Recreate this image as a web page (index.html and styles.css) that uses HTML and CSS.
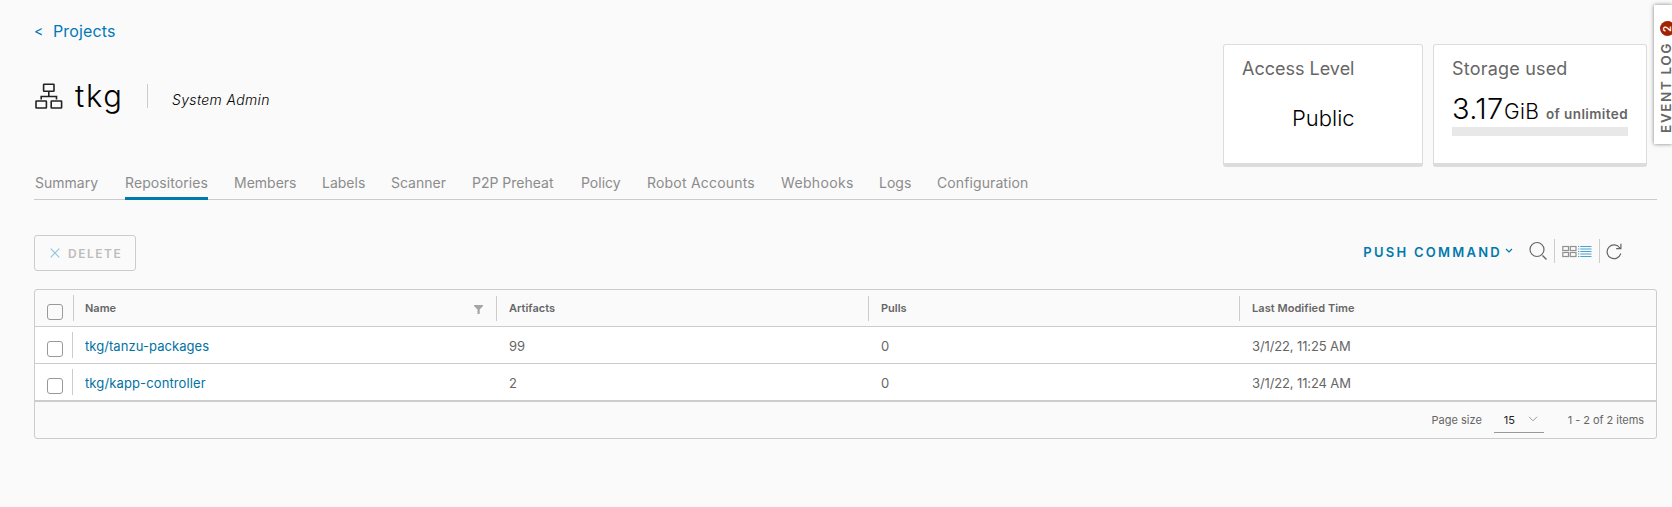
FILE: index.html
```html
<!DOCTYPE html>
<html lang="en">
<head>
<meta charset="utf-8">
<title>tkg - Repositories</title>
<link rel="stylesheet" href="styles.css">
</head>
<body>
<main class="page">
  <header class="head">
    <div class="head-left">
      <nav class="crumb"><a class="back">&lt;</a><a class="projects">Projects</a></nav>
      <div class="title-row">
        <svg class="org" width="28" height="27" viewBox="0 0 28 27" fill="none" stroke="#222" stroke-width="1.6"><rect x="8.6" y="1.3" width="10.4" height="7" rx=".5"/><rect x="1" y="18" width="10.4" height="7" rx=".5"/><rect x="16.2" y="18" width="10.4" height="7" rx=".5"/><path d="M13.8 8.5v4.5M6.2 16.5V13.500h15.300v3"/></svg>
        <h1 class="name">tkg</h1>
        <span class="role">System Admin</span>
      </div>
    </div>
    <div class="cards">
      <section class="card access">
        <h2 class="card-title access-title">Access Level</h2>
        <p class="public">Public</p>
      </section>
      <section class="card storage">
        <h2 class="card-title storage-title">Storage used</h2>
        <p class="usage"><span class="amount">3.17</span><span class="unit">GiB</span><span class="limit">of unlimited</span></p>
        <div class="meter"></div>
      </section>
    </div>
  </header>
  <nav class="tabs">
    <a class="tab">Summary</a><a class="tab repos active">Repositories</a><a class="tab">Members</a><a class="tab">Labels</a><a class="tab">Scanner</a><a class="tab">P2P Preheat</a><a class="tab">Policy</a><a class="tab robots">Robot Accounts</a><a class="tab hooks">Webhooks</a><a class="tab">Logs</a><a class="tab config">Configuration</a>
  </nav>
  <div class="toolbar">
    <button class="delete"><svg width="10" height="10" viewBox="0 0 10 10" fill="none" stroke="#8fc5dd" stroke-width="1.1"><path d="M.7.7l8.600 8.600M9.300.7L.7 9.300"/></svg><span>DELETE</span></button>
    <div class="tools">
      <span class="push">PUSH COMMAND</span>
      <svg class="caret" width="8" height="6" viewBox="0 0 8 6" fill="none" stroke="#0079ad" stroke-width="1.2"><path d="M1 1l3 3 3-3"/></svg>
      <svg class="search" width="20" height="20" viewBox="0 0 20 20" fill="none" stroke="#666" stroke-width="1.200"><circle cx="8" cy="8.500" r="7"/><path d="M13.500 14.500l4 4" stroke-width="1.500"/></svg>
      <span class="rule"></span>
      <svg class="grid-icon" width="15" height="13" viewBox="0 0 15 13" fill="none" stroke="#919191" stroke-width="1.200"><rect x=".8" y="1.500" width="5.700" height="4"/><rect x="8.300" y="1.500" width="5.700" height="4"/><rect x=".8" y="7.500" width="5.700" height="4"/><rect x="8.300" y="7.500" width="5.700" height="4"/></svg>
      <svg class="list-icon" width="14" height="13" viewBox="0 0 14 13" stroke="#49a3d0" stroke-width="1.200"><path d="M0 1.500h1.300M0 4h1.300M0 6.500h1.300M0 9h1.300M0 11.500h1.300M2.300 1.500H13.500M2.300 4H13.500M2.300 6.500H13.500M2.300 9H13.500M2.300 11.500H13.500"/></svg>
      <span class="rule"></span>
      <svg class="refresh" width="17" height="17" viewBox="0 0 17 17" fill="none" stroke="#666" stroke-width="1.200"><path d="M14.700 10.500A6.900 6.900 0 1 1 13.800 5M14.900.8v4.800h-4.800"/></svg>
    </div>
  </div>
  <section class="grid">
    <div class="row header">
      <div class="check"><i class="box"></i></div>
      <div class="cell">Name<svg class="filter" width="9" height="9" viewBox="0 0 9 9" fill="#a5a5a5"><path d="M0 0h9v1L5.700 4.600V9H3.500V4.600L0 1z"/></svg></div>
      <div class="cell">Artifacts</div><div class="cell">Pulls</div><div class="cell modified">Last Modified Time</div>
    </div>
    <div class="row">
      <div class="check"><i class="box"></i></div>
      <div class="cell"><a class="link">tkg/tanzu-packages</a></div><div class="cell">99</div><div class="cell">0</div><div class="cell date">3/1/22, 11:25 AM</div>
    </div>
    <div class="row">
      <div class="check"><i class="box"></i></div>
      <div class="cell"><a class="link kapp">tkg/kapp-controller</a></div><div class="cell">2</div><div class="cell">0</div><div class="cell date">3/1/22, 11:24 AM</div>
    </div>
    <div class="foot">
      <span class="size-label">Page size</span>
      <span class="select">15<svg width="10" height="6" viewBox="0 0 10 6" fill="none" stroke="#999" stroke-width="1"><path d="M1 .8l4 4 4-4"/></svg></span>
      <span class="count">1 - 2 of 2 items</span>
    </div>
  </section>
  <aside class="event"><span class="badge">2</span><span class="event-text">EVENT LOG</span></aside>
</main>
</body>
</html>
```
FILE: styles.css
```css
* { box-sizing: border-box; }
body { margin: 0; background: #fafafa; font-family: Inter, "Liberation Sans", sans-serif; color: #666; }
h1, h2, p { margin: 0; font-weight: 400; }
.page { position: relative; width: 1672px; height: 507px; padding: 0 15px 0 34px; overflow: hidden; white-space: nowrap; }
.head { display: flex; justify-content: space-between; height: 172px; }
.crumb { display: flex; margin-top: 19px; height: 24px; line-height: 24px; color: #0079b8; font-size: 16px; }
.back { width: 19px; font-size: 14px; }
.projects { letter-spacing: .15px; }
.title-row { display: flex; align-items: center; height: 40px; margin-top: 33px; }
.org { margin-left: 1px; }
.name { width: 84px; padding-left: 12px; color: #000; font-size: 31px; font-weight: 300; line-height: 40px; letter-spacing: 1.7px; }
.role { height: 24px; padding-left: 24px; border-left: 1px solid #ccc; color: #000; font-size: 14px; font-style: italic; font-weight: 300; line-height: 32px; letter-spacing: .35px; }
.cards { display: flex; gap: 10px; padding: 44px 10px 0 0; }
.card { height: 123px; padding: 12px 18px 0; background: #fff; border: 1px solid #dcdcdc; border-bottom-width: 4px; border-radius: 3px; }
.access { width: 200px; }
.storage { width: 214px; }
.card-title { font-size: 18px; line-height: 24px; }
.storage-title { letter-spacing: .2px; }
.public { padding: 22px 0 0 50px; color: #000; font-size: 22px; font-weight: 300; line-height: 30px; }
.usage { display: flex; align-items: baseline; height: 40px; margin-top: 6px; color: #000; line-height: 43px; }
.amount { width: 52px; font-size: 29px; font-weight: 300; letter-spacing: .3px; }
.unit { width: 37px; font-size: 21px; font-weight: 300; letter-spacing: .4px; }
.limit { margin-left: 5px; color: #666; font-size: 13.5px; font-weight: 600; letter-spacing: .4px; }
.meter { width: 176px; height: 9px; background: #e8e8e8; }
.tabs { display: grid; grid-template-columns: 90px 109px 88px 69px 81px 109px 66px 134px 98px 58px auto; justify-content: start; height: 28px; padding-left: 1px; border-bottom: 1px solid #ccc; font-size: 14px; line-height: 22px; color: #8c8c8c; }
.tab { justify-self: start; height: 28px; }
.repos { letter-spacing: .08px; }
.robots { letter-spacing: .2px; }
.hooks { letter-spacing: .35px; }
.config { letter-spacing: .1px; }
.active { border-bottom: 3px solid #0079ad; }
.toolbar { display: flex; justify-content: space-between; align-items: flex-start; margin-top: 35px; height: 54px; }
.delete { display: flex; align-items: center; gap: 8px; width: 102px; height: 36px; padding: 0 0 0 15px; border: 1px solid #ccc; border-radius: 3px; background: transparent; color: #bdbdbd; font: 600 12px/34px Inter, sans-serif; letter-spacing: 1.5px; }
.delete span { padding-top: 1px; }
.tools { display: flex; align-items: center; height: 34px; padding-right: 34px; }
.push { color: #0079ad; font-size: 13px; font-weight: 600; letter-spacing: 2.25px; }
.caret { margin: 0 16px 0 3px; }
.search { margin-right: 5px; }
.rule { width: 1px; height: 24px; background: #ccc; }
.grid-icon { margin-left: 7px; }
.list-icon { margin: 0 7px 0 1px; }
.refresh { margin-left: 6px; }
.caret, .search, .rule, .grid-icon, .list-icon, .refresh { margin-bottom: 2px; }
.grid { width: 1623px; height: 150px; border: 1px solid #ccc; border-radius: 3px; }
.row { display: grid; grid-template-columns: 38px 423px 372px 371px 1fr; height: 37px; background: #fff; border-bottom: 1px solid #ccc; font-size: 13px; line-height: 38px; }
.check { display: flex; align-items: center; justify-content: space-between; height: 36px; padding-left: 12px; }
.check::after { width: 1px; height: 26px; background: #ccc; content: ""; }
.box { width: 16px; height: 16px; margin-top: 8px; border: 1px solid #999; border-radius: 3px; }
.cell { height: 36px; padding-left: 12px; }
.cell:nth-child(n+3) { padding-left: 13px; }
.link { color: #0072a3; letter-spacing: .06px; }
.kapp { letter-spacing: .12px; }
.date { letter-spacing: -.12px; }
.header { grid-template-columns: 39px 423px 372px 371px 1fr; background: transparent; font-size: 11px; font-weight: 600; line-height: 36px; }
.header .cell, .header .cell:nth-child(n+3) { display: flex; align-items: center; justify-content: space-between; padding-left: 12px; }
.header .cell:nth-child(2) { padding-left: 11px; }
.header .cell:not(:last-child)::after { width: 1px; height: 25px; background: #ccc; content: ""; }
.modified { letter-spacing: .05px; }
.filter { margin: 3px 13px 0 auto; }
.foot { display: flex; justify-content: flex-end; height: 37px; padding-right: 12px; border-top: 1px solid #ccc; font-size: 11px; line-height: 36px; }
.select { display: flex; align-items: center; justify-content: space-between; width: 50px; height: 31px; margin: 0 24px 0 12px; padding: 5px 6px 0 10px; border-bottom: 1px solid #999; color: #222; }
.select svg { margin-bottom: 2px; }
.count { letter-spacing: -.06px; }
.event { position: absolute; top: 5px; left: 1654px; display: flex; flex-direction: column; gap: 6px; width: 18px; height: 139px; padding: 16px 0 0 6px; background: #fff; box-shadow: 0 0 4px rgba(0,0,0,.5); font-size: 13.5px; font-weight: 600; }
.badge, .event-text { writing-mode: vertical-rl; transform: rotate(180deg); }
.badge { width: 15px; height: 15px; border-radius: 50%; background: #a32100; color: #fff; font-size: 10px; line-height: 15px; text-align: center; }
.event-text { width: 12px; line-height: 12px; letter-spacing: 1.6px; }
```
